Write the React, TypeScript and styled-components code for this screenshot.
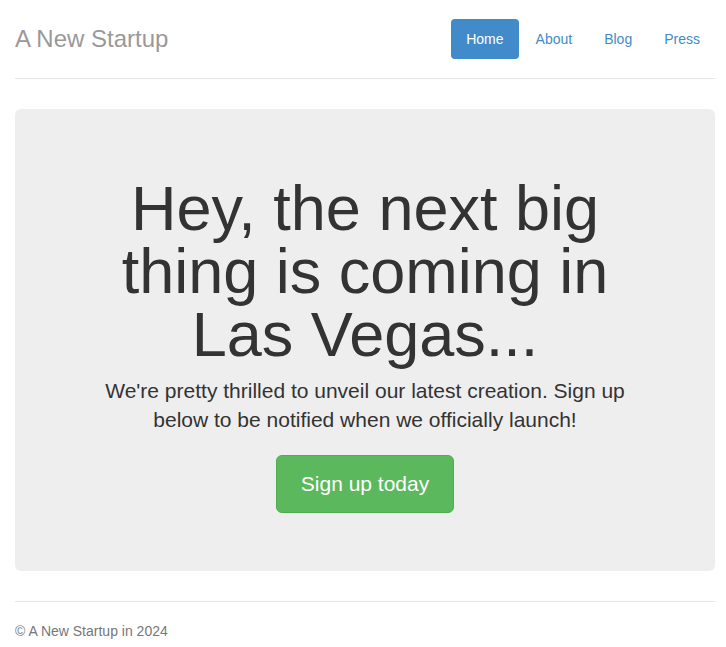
import styled, { createGlobalStyle } from 'styled-components';

const GlobalStyle = createGlobalStyle`
  html, body {
    margin: 0;
    padding: 0;
    overflow-x: hidden;
    background: #fff;
  }
  body {
    font-family: "Liberation Sans", Arial, Helvetica, sans-serif;
    font-size: 14px;
    line-height: 1.428571429;
    color: #333;
  }
  * {
    box-sizing: border-box;
  }
`;

const Container = styled.div`
  width: 730px;
  margin: 0 auto;
  padding: 0 15px;
`;

const Header = styled.header`
  display: flex;
  justify-content: space-between;
  align-items: center;
  padding: 19px 0 19px;
  border-bottom: 1px solid #e5e5e5;
  margin-bottom: 30px;
`;

const Brand = styled.h3`
  margin: 0;
  font-size: 24px;
  font-weight: 500;
  line-height: 40px;
  color: #999;
`;

const Nav = styled.ul`
  display: flex;
  list-style: none;
  margin: 0;
  padding: 0;
  gap: 2px;
`;

const NavLink = styled.a<{ $active?: boolean }>`
  display: block;
  padding: 10px 15px;
  line-height: 20px;
  border-radius: 4px;
  text-decoration: none;
  color: ${(p) => (p.$active ? '#fff' : '#428bca')};
  background: ${(p) => (p.$active ? '#428bca' : 'transparent')};
`;

const Jumbotron = styled.section`
  background: #eee;
  border-radius: 6px;
  padding: 48px 60px 58px;
  text-align: center;
  margin-bottom: 30px;
`;

const Heading = styled.h1`
  margin: 20px 0 10px;
  font-size: 63px;
  font-weight: 500;
  line-height: 1;
  color: #333;
`;

const Lead = styled.p`
  margin: 0 0 20px;
  font-size: 21px;
  line-height: 1.4;
  font-weight: 200;
`;

const SignUpButton = styled.a`
  display: inline-block;
  padding: 14px 24px;
  font-size: 21px;
  line-height: 1.3333;
  color: #fff;
  background: #5cb85c;
  border: 1px solid #4cae4c;
  border-radius: 6px;
  text-decoration: none;
`;

const Footer = styled.footer`
  padding-top: 19px;
  border-top: 1px solid #e5e5e5;
  color: #777;
  line-height: 20px;
`;

export default function App() {
  return (
    <>
      <GlobalStyle />
      <Container>
        <Header>
          <Brand>A New Startup</Brand>
          <Nav>
            <li>
              <NavLink href="#" $active>
                Home
              </NavLink>
            </li>
            <li>
              <NavLink href="#">About</NavLink>
            </li>
            <li>
              <NavLink href="#">Blog</NavLink>
            </li>
            <li>
              <NavLink href="#">Press</NavLink>
            </li>
          </Nav>
        </Header>
        <Jumbotron>
          <Heading>Hey, the next big thing is coming in Las Vegas...</Heading>
          <Lead>
            We're pretty thrilled to unveil our latest creation. Sign up below
            to be notified when we officially launch!
          </Lead>
          <SignUpButton href="#">Sign up today</SignUpButton>
        </Jumbotron>
        <Footer>© A New Startup in 2024</Footer>
      </Container>
    </>
  );
}
